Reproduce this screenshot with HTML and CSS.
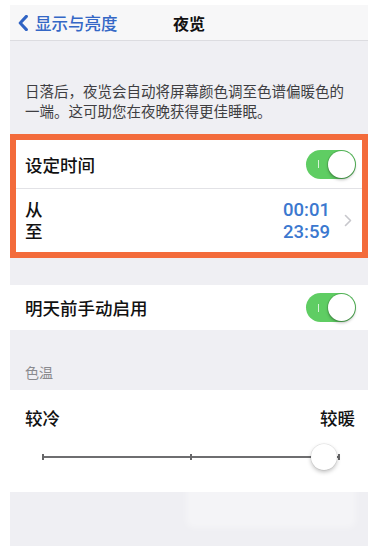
FILE: index.html
```html
<!DOCTYPE html>
<html lang="zh-CN">
<head>
<meta charset="utf-8">
<title>夜览</title>
<link rel="stylesheet" href="styles.css">
</head>
<body>
<div class="screen">
  <div class="nav">
    <div class="back">
      <svg class="chev" width="10" height="16" viewBox="0 0 10 16"><path d="M8.4 1.4 L2.2 8 L8.4 14.6" fill="none" stroke="#2f63c4" stroke-width="3" stroke-linecap="round" stroke-linejoin="round"/></svg>
      <span>显示与亮度</span>
    </div>
    <div class="title">夜览</div>
    <div></div>
  </div>

  <div class="desc">日落后，夜览会自动将屏幕颜色调至色谱偏暖色的一端。这可助您在夜晚获得更佳睡眠。</div>

  <div class="highlight">
    <div class="row row-sched">
      <span class="label">设定时间</span>
      <div class="toggle"><span class="mark"></span><span class="knob"></span></div>
    </div>
    <div class="row row-times">
      <div class="fromto">
        <span class="label">从</span>
        <span class="label">至</span>
      </div>
      <div class="times">
        <span>00:01</span>
        <span>23:59</span>
      </div>
      <svg class="disc" width="8" height="13" viewBox="0 0 8 13"><path d="M1.5 1.5 L6.5 6.5 L1.5 11.5" fill="none" stroke="#c7c7cc" stroke-width="1.6" stroke-linecap="round" stroke-linejoin="round"/></svg>
    </div>
  </div>

  <div class="gap"></div>

  <div class="row row-manual">
    <span class="label">明天前手动启用</span>
    <div class="toggle"><span class="mark"></span><span class="knob"></span></div>
  </div>

  <div class="section-head">色温</div>

  <div class="temp">
    <div class="temp-labels">
      <span class="label">较冷</span>
      <span class="label">较暖</span>
    </div>
    <div class="slider">
      <div class="track">
        <span class="tick tick-l"></span>
        <span class="tick tick-m"></span>
        <span class="tick tick-r"></span>
      </div>
      <span class="thumb"></span>
    </div>
  </div>

  <div class="bottom">
    <div class="smudge"></div>
  </div>
</div>
</body>
</html>
```

FILE: styles.css
```css
html, body {
  margin: 0;
  padding: 0;
  background: #ffffff;
}

.screen {
  margin: 5px 10px 0;
  width: 358px;
  height: 541px;
  background: #efeff3;
  overflow: hidden;
  font-family: "Liberation Sans", "Noto Sans CJK SC", sans-serif;
  color: #111;
}

.nav {
  height: 35px;
  border-bottom: 1px solid #dcdce0;
  background: #f7f7f8;
  display: grid;
  grid-template-columns: 1fr auto 1fr;
  align-items: center;
}

.back {
  display: flex;
  align-items: center;
  padding-left: 8px;
  color: #3467c6;
  font-size: 16.5px;
  font-weight: 500;
  gap: 7px;
}

.chev {
  display: block;
}

.title {
  font-size: 16px;
  font-weight: bold;
  color: #111;
}

.desc {
  padding: 41px 14px 12px 15px;
  font-size: 14.5px;
  line-height: 20px;
  color: #3e3e42;
}

.highlight {
  border: 6px solid #f36b3b;
  background: #ffffff;
}

.row {
  display: flex;
  align-items: center;
  justify-content: space-between;
  background: #ffffff;
}

.label {
  font-size: 17.5px;
  font-weight: 500;
  color: #111;
}

.row-sched {
  height: 48px;
  padding: 0 6px 0 9px;
  border-bottom: 1px solid #e2e2e6;
}

.row-times {
  height: 63px;
  padding: 0 10px 0 9px;
}

.fromto, .times {
  display: flex;
  flex-direction: column;
  line-height: 22px;
}

.fromto {
  flex: 1;
}

.times {
  align-items: flex-end;
  font-family: Roboto, "Liberation Sans", sans-serif;
  font-weight: 500;
  font-size: 18.5px;
  color: #3b78cf;
  margin-right: 14px;
}

.disc {
  display: block;
}

.toggle {
  width: 50px;
  height: 29px;
  border-radius: 15px;
  background: #5fcd63;
  display: flex;
  align-items: center;
  justify-content: space-between;
  padding: 0 1px 0 12px;
  box-sizing: border-box;
}

.mark {
  width: 1px;
  height: 8px;
  background: rgba(255, 255, 255, 0.75);
}

.knob {
  width: 27px;
  height: 27px;
  border-radius: 50%;
  background: #ffffff;
  box-shadow: 0 0 0 1px rgba(0, 0, 0, 0.12), 0 2px 3px rgba(0, 0, 0, 0.25);
}

.gap {
  height: 27px;
}

.row-manual {
  height: 45px;
  padding: 0 12px 0 15px;
}

.section-head {
  height: 60px;
  box-sizing: border-box;
  display: flex;
  align-items: flex-end;
  padding: 0 15px 7px;
  font-size: 14px;
  line-height: 20px;
  color: #8a8a8e;
}

.temp {
  height: 102px;
  box-sizing: border-box;
  background: #ffffff;
  padding: 17px 13px 0 15px;
}

.temp-labels {
  display: flex;
  justify-content: space-between;
  line-height: 24px;
}

.slider {
  position: relative;
  margin: 13px 15px 0 17px;
  height: 26px;
  display: flex;
  align-items: center;
}

.track {
  position: relative;
  flex: 1;
  height: 2px;
  background: #6e6e70;
}

.tick {
  position: absolute;
  top: -2px;
  width: 2px;
  height: 6px;
  background: #666668;
}

.tick-l { left: 0; }
.tick-m { left: calc(50% - 1px); }
.tick-r { right: 0; }

.thumb {
  position: absolute;
  left: 269px;
  top: 0;
  width: 26px;
  height: 26px;
  border-radius: 50%;
  background: #ffffff;
  box-shadow: 0 0 0 0.5px rgba(0, 0, 0, 0.1), 0 2px 4px rgba(0, 0, 0, 0.25);
}

.bottom {
  position: relative;
  height: 60px;
}

.smudge {
  position: absolute;
  left: 176px;
  top: -12px;
  width: 170px;
  height: 48px;
  border-radius: 8px;
  background: rgba(255, 255, 255, 0.35);
  filter: blur(3px);
}
```
